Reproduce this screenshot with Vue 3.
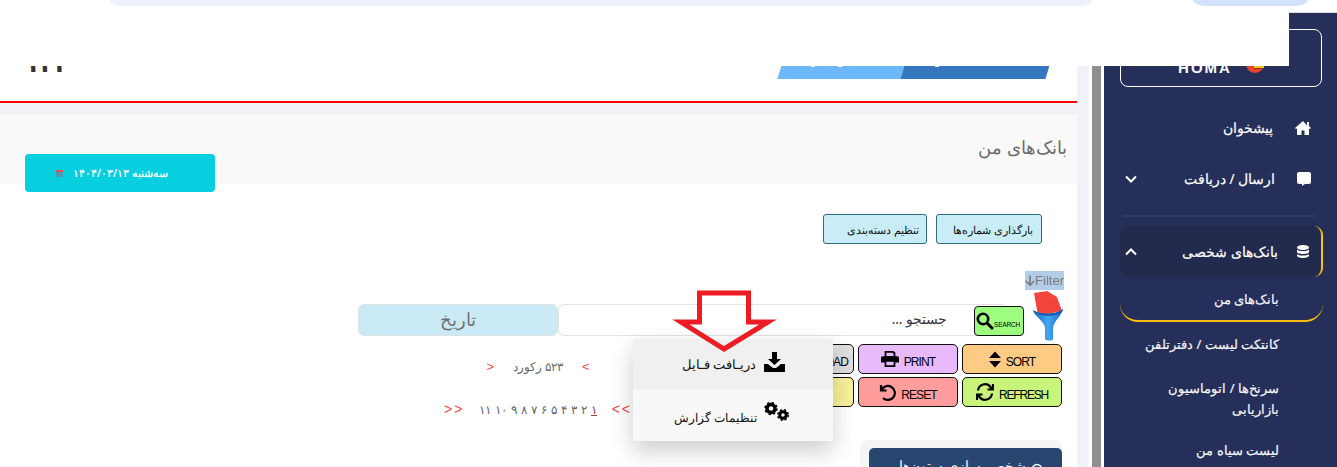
<template>
  <div class="page" dir="rtl">
    <aside class="sidebar">
      <div class="logo">
        <div class="logo-inner" dir="ltr">
          <span class="logo-word">HOMA</span>
          <svg class="logo-mark" width="18" height="18" viewBox="0 0 18 18">
            <circle cx="9" cy="9" r="9" fill="#e8432e" />
            <rect x="8" y="9" width="10" height="4" fill="#f7c21f" />
            <rect x="8" y="13" width="9" height="1" fill="#7a3b2a" />
          </svg>
        </div>
      </div>
      <nav class="menu">
        <a class="item">
          <svg class="ico" viewBox="0 0 16 14" width="16" height="14"><path d="M8 0 0 7l1 1 1-.8V14h4.5V9.5h3V14H14V7.200l1 .8 1-1-2-1.800V1h-2v3.400z" fill="#fff" /></svg>
          <span>پیشخوان</span>
        </a>
        <a class="item tall">
          <svg class="ico" viewBox="0 0 14 14" width="14" height="14"><path d="M2 0h10a2 2 0 0 1 2 2v8a2 2 0 0 1-2 2H8l-3 2v-2H2a2 2 0 0 1-2-2V2a2 2 0 0 1 2-2z" fill="#fff" /></svg>
          <span>ارسال / دریافت</span>
          <svg class="chev" viewBox="0 0 12 8" width="12" height="8"><path d="M1 1.5 6 6.5 11 1.5" fill="none" stroke="#fff" stroke-width="2" /></svg>
        </a>
        <div class="divider"></div>
        <a class="item active">
          <svg class="ico" viewBox="0 0 12 13" width="12" height="13"><path d="M0 2.500C0 1 2.700 0 6 0s6 1 6 2.500S9.300 5 6 5 0 4 0 2.500zM0 4.500C1 5.500 3.300 6 6 6s5-.5 6-1.500V7c0 1.200-2.700 2-6 2S0 8.200 0 7zM0 9c1 1 3.300 1.500 6 1.500S11 10 12 9v1.500C12 12 9.300 13 6 13s-6-1-6-2.500z" fill="#fff" /></svg>
          <span>بانک‌های شخصی</span>
          <svg class="chev" viewBox="0 0 12 8" width="12" height="8"><path d="M1 6.500 6 1.500 11 6.500" fill="none" stroke="#fff" stroke-width="2" /></svg>
        </a>
        <a class="sub current">بانک‌های من</a>
        <a class="sub">کانتکت لیست / دفترتلفن</a>
        <a class="sub">سرنخ‌ها / اتوماسیون بازاریابی</a>
        <a class="sub">لیست سیاه من</a>
      </nav>
    </aside>
    <div class="scroll"></div>

    <main class="content">
      <header class="head">
        <div class="tabs" dir="ltr">
          <div class="tab light"></div>
          <div class="tab dark"></div>
        </div>
        <div class="user" dir="ltr">۱۴۳</div>
      </header>
      <div class="strip"></div>
      <section class="title-bar">
        <h1>بانک‌های من</h1>
        <div class="date" dir="ltr">
          <svg width="7" height="7" viewBox="0 0 7 7"><rect width="7" height="7" fill="#4e9ab0" /><rect width="7" height="2" fill="#d9534f" /></svg>
          <span dir="rtl">سه‌شنبه ۱۴۰۴/۰۳/۱۳</span>
        </div>
      </section>

      <div class="actions">
        <button class="tool">بارگذاری شماره‌ها</button>
        <button class="tool">تنظیم دسته‌بندی</button>
      </div>

      <div class="filter-row">
        <span class="filter" dir="ltr">
          <svg width="11" height="12" viewBox="0 0 11 12"><path d="M5.500 0v10M1 6l4.500 4.500L10 6" fill="none" stroke="#7b7b7b" stroke-width="1.800" /></svg>Filter
        </span>
      </div>

      <div class="search-row">
        <svg class="funnel" width="32" height="50" viewBox="0 0 32 50">
          <defs>
            <linearGradient id="funnel-blue" x1="0" x2="1" y1="0" y2="0">
              <stop offset="0" stop-color="#1767c9" />
              <stop offset="0.5" stop-color="#45a6ee" />
              <stop offset="1" stop-color="#1767c9" />
            </linearGradient>
          </defs>
          <path d="M2 2 15 0l10 6 5 14-24 5z" fill="#f1453d" />
          <path d="M1 19c6 5 24 5 30-1-1 6-8 11-10 18v12c0 2-8 2-8 0V36C11 29 3 26 1 19z" fill="url(#funnel-blue)" />
          <path d="M1 19c6 5 24 5 30-1l-1 3c-7 5-21 5-28 0z" fill="#1458b0" />
        </svg>
        <button class="search-btn" dir="ltr">
          <svg width="18" height="18" viewBox="0 0 18 18"><circle cx="7" cy="7" r="5.200" fill="none" stroke="#000" stroke-width="2.600" /><path d="M11 11l6 6" stroke="#000" stroke-width="3" /></svg>
          <span>SEARCH</span>
        </button>
        <div class="search-input">جستجو ...</div>
        <div class="date-input">تاریخ</div>
      </div>

      <div class="grid-zone">
        <div class="btns" dir="ltr">
          <button class="b gray"><span>DOWNLOAD</span></button>
          <button class="b purple">
            <svg width="18" height="18" viewBox="0 0 20 18"><path d="M4 0h10l2 2v5H4zM6 2v4h8V3h-1V2z" fill="#000" fill-rule="evenodd" /><path d="M2 6h16a2 2 0 0 1 2 2v5h-4v5H4v-5H0V8a2 2 0 0 1 2-2zm4 6v4h8v-4z" fill="#000" fill-rule="evenodd" /></svg>
            <span>PRINT</span>
          </button>
          <button class="b orange">
            <svg width="12" height="17" viewBox="0 0 12 16"><path d="M6 0l6 6.500H0zM6 16l6-6.500H0z" fill="#000" /></svg>
            <span>SORT</span>
          </button>
          <button class="b yellow"></button>
          <button class="b red">
            <svg width="17" height="17" viewBox="0 0 17 17"><path d="M2 1v5.500h5.500M2.500 6A7 7 0 1 1 4 14" fill="none" stroke="#000" stroke-width="2.200" /></svg>
            <span>RESET</span>
          </button>
          <button class="b green">
            <svg width="18" height="18" viewBox="0 0 18 18"><path d="M2 7.500A7 7 0 0 1 14.500 4L16.500 6M17 1v5.500h-5.500M16 10.500A7 7 0 0 1 3.500 14L1.500 12M1 17v-5.500h5.500" fill="none" stroke="#000" stroke-width="2.200" /></svg>
            <span class="tight">REFRESH</span>
          </button>
        </div>

        <div class="pagers">
          <div class="records">
            <span class="red-txt">&gt;</span>
            <span>۵۲۳ رکورد</span>
            <span class="red-txt">&lt;</span>
          </div>
          <div class="pages">
            <span class="red-txt wide">&gt;&gt;</span>
            <span class="nums">
              <u>۱</u>
              <span v-for="n in pageNumbers" :key="n">{{ n }}</span>
            </span>
            <span class="red-txt wide">&lt;&lt;</span>
          </div>
        </div>

        <div class="popup">
          <div class="pop-item first">
            <svg width="21" height="20" viewBox="0 0 21 20"><path d="M8 0h5v7h4l-6.500 6L4 7h4zM0 12h4l5 4h3l5-4h4v8H0z" fill="#000" /></svg>
            <span>دریـافت فـایل</span>
          </div>
          <div class="pop-item">
            <svg class="gears" width="26" height="20" viewBox="0 0 26 20">
              <circle cx="7" cy="6.500" r="4" fill="none" stroke="#000" stroke-width="3.400" />
              <circle cx="7" cy="6.500" r="6" fill="none" stroke="#000" stroke-width="1.400" stroke-dasharray="2.500 2.200" />
              <circle cx="19" cy="13" r="3.300" fill="none" stroke="#000" stroke-width="3" />
              <circle cx="19" cy="13" r="5.300" fill="none" stroke="#000" stroke-width="1.400" stroke-dasharray="2.300 1.900" />
            </svg>
            <span class="report">تنظیمات گزارش</span>
          </div>
        </div>
      </div>

      <div class="card-wrap">
        <div class="card">
          <svg width="12" height="12" viewBox="0 0 12 12"><circle cx="6" cy="6" r="4.500" fill="none" stroke="#fff" stroke-width="1.500" /></svg>
          <span>شخصی‌سازی ستون‌ها</span>
        </div>
      </div>

      <svg class="arrow" width="110" height="66" viewBox="0 0 110 66">
        <path d="M29.500 4H78.500V33H98L54 60 11 33H29.500z" fill="none" stroke="#ed1c24" stroke-width="5" />
      </svg>
    </main>

    <div class="topbar" dir="ltr">
      <div class="pill long"></div>
      <div class="pill short"></div>
    </div>
    <div class="cover"></div>
  </div>
</template>

<script setup>
const pageNumbers = ["۲", "۳", "۴", "۵", "۶", "۷", "۸", "۹", "۱۰", "۱۱"];
</script>

<style>
html, body {
  margin: 0;
  background: #fff;
  overflow: hidden;
}
</style>

<style scoped>
.page {
  position: relative;
  width: 1337px;
  height: 467px;
  overflow: hidden;
  background: #fff;
  display: flex;
  font-family: "Noto Sans", "Liberation Sans", sans-serif;
  color: #333;
}

/* sidebar */
.sidebar {
  width: 233px;
  height: 467px;
  flex: none;
  background: #262f59;
  padding: 29px 14px 0 16px;
  box-sizing: border-box;
  color: #fff;
}
.logo {
  width: 202px;
  height: 58px;
  margin-right: 1px;
  border: 1px solid #fff;
  border-radius: 8px;
  box-sizing: border-box;
  display: flex;
  align-items: flex-end;
  justify-content: center;
}
.logo-inner {
  display: flex;
  align-items: flex-end;
  gap: 14px;
  padding-bottom: 13px;
}
.logo-word {
  font: 700 15px/11px "Liberation Sans", sans-serif;
  letter-spacing: 2px;
  color: #fff;
}
.menu {
  display: flex;
  flex-direction: column;
  margin-top: 16px;
  -webkit-text-stroke: 0.2px #fff;
}
.item {
  display: flex;
  align-items: center;
  height: 50px;
  padding: 0 12px 0 5px;
  gap: 22px;
  font-size: 13.5px;
}
.item.tall {
  height: 52px;
}
.item .ico {
  flex: none;
}
.item .chev {
  margin-right: auto;
}
.divider {
  height: 2px;
  background: #2e3a6c;
  margin: 10px 8px 9px 3px;
}
.item.active {
  height: 51px;
  background: #222a4e;
  border-right: 2px solid #ffbe0b;
  border-radius: 9px;
  padding-right: 12px;
  gap: 19px;
}
.sub {
  display: block;
  font-size: 13px;
  line-height: 21px;
  padding: 0 44px 0 10px;
  margin-top: 23px;
  color: #f1f2f7;
}
.sub:last-child {
  margin-top: 20px;
}
.sub.current {
  margin-top: 0;
  height: 45px;
  line-height: 44px;
  border-bottom: 2px solid #ffbe0b;
  border-radius: 0 0 18px 18px;
  box-sizing: border-box;
}
.sub.current + .sub {
  margin-top: 12px;
}

/* strip and scrollbar next to the sidebar */
.scroll {
  width: 27px;
  flex: none;
  background: linear-gradient(to right, #f0f2f7 12px, #fff 12px 15px, #8f8f8f 15px 24px, #fff 24px);
}

/* main */
.content {
  position: relative;
  flex: 1;
  min-width: 0;
  height: 467px;
}
.head {
  height: 101px;
  border-bottom: 2px solid #f00;
  display: flex;
  align-items: flex-end;
  justify-content: space-between;
}
.tabs {
  display: flex;
  margin: 0 27px 22px 0;
}
.tab {
  height: 30px;
  transform: skewX(-17deg);
}
.tab.light {
  width: 123px;
  background: radial-gradient(circle 5px at 32px 13px, #fff 98%, transparent),
    radial-gradient(circle 5px at 59px 13px, #fff 98%, transparent), #6cb8fb;
}
.tab.dark {
  width: 145px;
  background: radial-gradient(circle 5px at 33px 13px, #fff 98%, transparent), #3577bf;
}
.user {
  font: 700 24px/24px "Noto Sans", "DejaVu Sans", sans-serif;
  margin: 0 25px 26px 0;
  margin-left: 25px;
  margin-right: 0;
  color: #333;
}
.strip {
  height: 11px;
  background: #f0f2f7;
}
.title-bar {
  position: relative;
  height: 70px;
  background: #f9f9f9;
  padding: 19px 10px 0 0;
  box-sizing: border-box;
}
.title-bar h1 {
  margin: 0;
  font-size: 18px;
  font-weight: 400;
  line-height: 28px;
  color: #6c6c6c;
}
.date {
  position: absolute;
  left: 25px;
  top: 40px;
  width: 190px;
  height: 38px;
  padding-right: 16px;
  box-sizing: border-box;
  background: #08cfdf;
  border-radius: 4px;
  display: flex;
  align-items: center;
  justify-content: center;
  gap: 10px;
  color: #fff;
  font-size: 10.5px;
  font-weight: 500;
  -webkit-text-stroke: 0.2px #fff;
}
.actions {
  display: flex;
  gap: 9px;
  padding: 30px 35px 0 0;
}
.tool {
  height: 30px;
  padding: 0 0 0 8px;
  width: 106px;
  white-space: nowrap;
  background: #c9edf6;
  border: 1px solid #2d6b7d;
  border-radius: 3px;
  font: 11px "Noto Sans", sans-serif;
  color: #111;
}
.actions .tool:last-child {
  width: 104px;
  padding-left: 16px;
}
.filter-row {
  padding: 27px 13px 0 0;
  height: 19px;
  display: flex;
}
.filter {
  background: #b3cde8;
  color: #7b7b7b;
  font: 13px/19px "Liberation Sans", sans-serif;
  width: 39px;
  white-space: nowrap;
  display: flex;
  align-items: center;
}
.search-row {
  display: flex;
  align-items: center;
  margin-top: 14px;
  height: 32px;
  padding-right: 13px;
}
.funnel {
  flex: none;
  margin-top: -8px;
  margin-left: 8px;
  position: relative;
}
.search-btn {
  width: 50px;
  height: 30px;
  margin-top: 2px;
  padding: 0 0 0 1px;
  flex: none;
  background: #9dfd7e;
  border: 1px solid #111;
  border-radius: 4px;
  display: flex;
  align-items: center;
  z-index: 1;
}
.search-btn span {
  font: 6.5px "Liberation Sans", sans-serif;
  margin-top: 6px;
  letter-spacing: -0.2px;
}
.search-input {
  width: 450px;
  height: 32px;
  margin-right: -34px;
  flex: none;
  background: #fff;
  border: 1px solid #e2e2e2;
  border-radius: 6px;
  box-sizing: border-box;
  padding: 0 60px 0 0;
  line-height: 28px;
  font-size: 13.5px;
  color: #333;
}
.date-input {
  width: 200px;
  height: 32px;
  flex: none;
  background: #c9eaf5;
  border: 1px solid #e2e2e2;
  border-radius: 6px;
  box-sizing: border-box;
  text-align: center;
  line-height: 28px;
  font-size: 18px;
  letter-spacing: 1.5px;
  color: #707070;
}

.grid-zone {
  position: relative;
  display: flex;
  align-items: flex-start;
  height: 96px;
  margin-top: 8px;
  padding-right: 15px;
}
.btns {
  flex: none;
  display: grid;
  grid-template-columns: repeat(3, 100px);
  gap: 3px 4px;
}
.b {
  height: 30px;
  padding: 0;
  border: 1px solid #111;
  border-radius: 5px;
  display: flex;
  align-items: center;
  justify-content: center;
  gap: 5px;
  font: 12px "Liberation Sans", sans-serif;
  letter-spacing: -0.9px;
  color: #000;
  overflow: hidden;
}
.b span {
  margin-top: 6px;
}
.b .tight {
  letter-spacing: -1.2px;
}
.gray {
  background: #dedede;
  justify-content: flex-end;
  padding-right: 5px;
}
.purple { background: #e8b9fb; }
.orange { background: #fdcb84; }
.yellow { background: #f8f19a; }
.red { background: #ff9d9d; }
.green { background: #c9f47c; }
.pagers {
  flex: none;
  width: 188px;
  margin-right: 122px;
  padding-top: 15px;
  display: flex;
  flex-direction: column;
  align-items: center;
  font-size: 11.5px;
  color: #666;
}
.records {
  width: 103px;
  display: flex;
  justify-content: space-between;
  align-items: center;
}
.pages {
  width: 100%;
  display: flex;
  align-items: center;
  justify-content: space-between;
  margin-top: 27px;
}
.red-txt {
  color: #ef4a4a;
  font: 13px "Liberation Sans", sans-serif;
}
.red-txt.wide {
  font-size: 14px;
  letter-spacing: 2px;
}
.nums {
  display: flex;
  gap: 4px;
  font-size: 11.5px;
}
.nums u {
  color: #a23a3a;
}
.popup {
  position: absolute;
  left: 633px;
  top: -5px;
  width: 200px;
  height: 102px;
  background: #f8f8f8;
  box-shadow: 0 10px 22px rgba(0, 0, 0, 0.2);
  font-size: 12.5px;
  color: #111;
}
.pop-item {
  height: 51px;
  display: flex;
  align-items: center;
  gap: 8px;
  padding-right: 48px;
}
.pop-item:not(.first) {
  padding-right: 43px;
  gap: 7px;
}
.pop-item.first {
  background: #f0f0f0;
}
.pop-item svg {
  margin-top: -6px;
}
.pop-item .gears {
  margin-top: -8px;
}
.report {
  font-size: 12px;
  margin-top: 4px;
}
.card-wrap {
  width: 202px;
  height: 27px;
  margin-right: 15px;
  background: #f4f5f7;
  border-radius: 8px 8px 0 0;
  padding: 8px 0 0 9px;
  box-sizing: border-box;
}
.card {
  height: 40px;
  background: #294670;
  border-radius: 5px 5px 0 0;
  color: #fff;
  font-size: 14px;
  padding: 8px 19px 0 0;
  box-sizing: border-box;
  display: flex;
  gap: 5px;
  align-items: flex-start;
}
.card svg {
  margin-top: 7px;
  flex: none;
}
.arrow {
  position: absolute;
  left: 670px;
  top: 289px;
}

/* overlays */
.cover {
  position: absolute;
  left: 0;
  top: 12px;
  width: 1289px;
  height: 54px;
  background: #fff;
}
.topbar {
  position: absolute;
  left: 0;
  top: 0;
  width: 1337px;
  height: 12px;
  background: #fff;
  border-bottom: 1px solid #ddd;
  display: flex;
}
.pill {
  height: 6px;
  border-radius: 0 0 14px 14px / 0 0 6px 6px;
}
.long {
  width: 983px;
  margin-left: 109px;
  background: #edf1f9;
}
.short {
  width: 115px;
  margin-left: 101px;
  background: #d3e3fc;
}
</style>
